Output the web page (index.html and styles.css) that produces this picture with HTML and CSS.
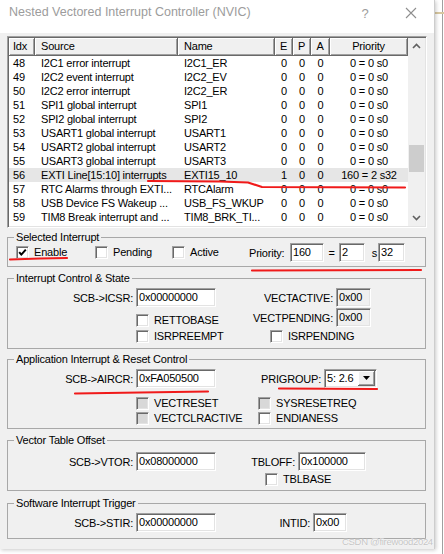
FILE: index.html
```html
<!DOCTYPE html>
<html>
<head>
<meta charset="utf-8">
<title>NVIC</title>
<link rel="stylesheet" href="styles.css">
</head>
<body>
<div class="window">
  <div class="titlebar">
    <span class="title">Nested Vectored Interrupt Controller (NVIC)</span>
    <span class="tbtn help">?</span>
    <span class="tbtn"><svg width="12" height="12" viewBox="0 0 12 12"><path d="M1 1L11 11M11 1L1 11" stroke="#8e8e8e" stroke-width="1.1" fill="none"/></svg></span>
  </div>
  <div class="client">
    <div class="list">
      <div class="list-main">
        <div class="lrow head"><span class="ci">Idx</span><span>Source</span><span>Name</span><span class="cc">E</span><span class="cc">P</span><span class="cc">A</span><span class="cc">Priority</span></div>
        <div class="lrow"><span class="ci">48</span><span>I2C1 error interrupt</span><span>I2C1_ER</span><span class="cc">0</span><span class="cc">0</span><span class="cc">0</span><span class="cc">0 = 0 s0</span></div>
        <div class="lrow"><span class="ci">49</span><span>I2C2 event interrupt</span><span>I2C2_EV</span><span class="cc">0</span><span class="cc">0</span><span class="cc">0</span><span class="cc">0 = 0 s0</span></div>
        <div class="lrow"><span class="ci">50</span><span>I2C2 error interrupt</span><span>I2C2_ER</span><span class="cc">0</span><span class="cc">0</span><span class="cc">0</span><span class="cc">0 = 0 s0</span></div>
        <div class="lrow"><span class="ci">51</span><span>SPI1 global interrupt</span><span>SPI1</span><span class="cc">0</span><span class="cc">0</span><span class="cc">0</span><span class="cc">0 = 0 s0</span></div>
        <div class="lrow"><span class="ci">52</span><span>SPI2 global interrupt</span><span>SPI2</span><span class="cc">0</span><span class="cc">0</span><span class="cc">0</span><span class="cc">0 = 0 s0</span></div>
        <div class="lrow"><span class="ci">53</span><span>USART1 global interrupt</span><span>USART1</span><span class="cc">0</span><span class="cc">0</span><span class="cc">0</span><span class="cc">0 = 0 s0</span></div>
        <div class="lrow"><span class="ci">54</span><span>USART2 global interrupt</span><span>USART2</span><span class="cc">0</span><span class="cc">0</span><span class="cc">0</span><span class="cc">0 = 0 s0</span></div>
        <div class="lrow"><span class="ci">55</span><span>USART3 global interrupt</span><span>USART3</span><span class="cc">0</span><span class="cc">0</span><span class="cc">0</span><span class="cc">0 = 0 s0</span></div>
        <div class="lrow sel"><span class="ci">56</span><span>EXTI Line[15:10] interrupts</span><span>EXTI15_10</span><span class="cc">1</span><span class="cc">0</span><span class="cc">0</span><span class="cc">160 = 2 s32</span></div>
        <div class="lrow"><span class="ci">57</span><span>RTC Alarms through EXTI...</span><span>RTCAlarm</span><span class="cc">0</span><span class="cc">0</span><span class="cc">0</span><span class="cc">0 = 0 s0</span></div>
        <div class="lrow"><span class="ci">58</span><span>USB Device FS Wakeup ...</span><span>USB_FS_WKUP</span><span class="cc">0</span><span class="cc">0</span><span class="cc">0</span><span class="cc">0 = 0 s0</span></div>
        <div class="lrow"><span class="ci">59</span><span>TIM8 Break interrupt and ...</span><span>TIM8_BRK_TI...</span><span class="cc">0</span><span class="cc">0</span><span class="cc">0</span><span class="cc">0 = 0 s0</span></div>
      </div>
      <div class="sb">
        <div class="sb-btn"><svg width="9" height="6" viewBox="0 0 9 6"><path d="M1 5L4.5 1.5L8 5" stroke="#606060" stroke-width="1.6" fill="none"/></svg></div>
        <div class="sb-track"><div class="sb-thumb"></div></div>
        <div class="sb-btn down"><svg width="9" height="6" viewBox="0 0 9 6"><path d="M1 1L4.5 4.5L8 1" stroke="#606060" stroke-width="1.6" fill="none"/></svg></div>
      </div>
    </div>

    <fieldset class="grp g1">
      <legend>Selected Interrupt</legend>
      <div class="row r-sel">
        <span class="cb w79"><span class="box"><svg width="11" height="11" viewBox="0 0 11 11"><path d="M2.2 5.2L4.3 7.6L8.8 2.6" stroke="#000" stroke-width="2" fill="none"/></svg></span>Enable</span>
        <span class="cb w77"><span class="box"></span>Pending</span>
        <span class="cb w77"><span class="box"></span>Active</span>
        <span class="txt w41">Priority:</span>
        <span class="edit w34">160</span>
        <span class="txt eq">=</span>
        <span class="edit w26">2</span>
        <span class="lbl w13">s</span>
        <span class="edit w27">32</span>
      </div>
    </fieldset>

    <fieldset class="grp g2">
      <legend>Interrupt Control &amp; State</legend>
      <div class="row r-first">
        <span class="lbl w128">SCB-&gt;ICSR:</span>
        <span class="edit w80">0x00000000</span>
        <span class="lbl w120">VECTACTIVE:</span>
        <span class="edit w35 dis">0x00</span>
      </div>
      <div class="row r-tight">
        <span class="sp w128"></span>
        <span class="cb w80 low"><span class="box"></span>RETTOBASE</span>
        <span class="lbl w120">VECTPENDING:</span>
        <span class="edit w35 dis">0x00</span>
      </div>
      <div class="row ck13">
        <span class="sp w128"></span>
        <span class="cb w134"><span class="box"></span>ISRPREEMPT</span>
        <span class="cb"><span class="box"></span>ISRPENDING</span>
      </div>
    </fieldset>

    <fieldset class="grp g3">
      <legend>Application Interrupt &amp; Reset Control</legend>
      <div class="row r-first">
        <span class="lbl w128">SCB-&gt;AIRCR:</span>
        <span class="edit w80">0xFA050500</span>
        <span class="lbl w108">PRIGROUP:</span>
        <span class="combo"><span class="combo-text">5: 2.6</span><span class="combo-btn"><svg width="7" height="4" viewBox="0 0 7 4"><path d="M0 0H7L3.5 4Z" fill="#000"/></svg></span></span>
      </div>
      <div class="row ck r-gap">
        <span class="sp w128"></span>
        <span class="cb w122"><span class="box dis"></span>VECTRESET</span>
        <span class="cb"><span class="box dis"></span>SYSRESETREQ</span>
      </div>
      <div class="row ck">
        <span class="sp w128"></span>
        <span class="cb w122"><span class="box dis"></span>VECTCLRACTIVE</span>
        <span class="cb"><span class="box"></span>ENDIANESS</span>
      </div>
    </fieldset>

    <fieldset class="grp g4">
      <legend>Vector Table Offset</legend>
      <div class="row r-first5">
        <span class="lbl w128">SCB-&gt;VTOR:</span>
        <span class="edit w80">0x08000000</span>
        <span class="lbl w82">TBLOFF:</span>
        <span class="edit w68">0x100000</span>
      </div>
      <div class="row ck r-tight">
        <span class="sp w257"></span>
        <span class="cb"><span class="box"></span>TBLBASE</span>
      </div>
    </fieldset>

    <fieldset class="grp g5">
      <legend>Software Interrupt Trigger</legend>
      <div class="row r-first">
        <span class="lbl w128">SCB-&gt;STIR:</span>
        <span class="edit w80">0x00000000</span>
        <span class="lbl w97">INTID:</span>
        <span class="edit w34">0x00</span>
      </div>
    </fieldset>
  </div>
</div>

<svg class="marks" width="444" height="554" viewBox="0 0 444 554">
  <polyline points="148,181 220,181.5 248,182.5 262,187 405,187.5" />
  <polyline points="10,259.5 40,258.5 67,258" />
  <polyline points="252,270.5 421,270" />
  <polyline points="75,393.5 140,392.5 208,391.5" />
  <polyline points="279,388.5 377,389" />
</svg>
<div class="watermark">CSDN @firewood2024</div>
</body>
</html>
```

FILE: styles.css
```css
* { box-sizing: border-box; }
html, body { margin: 0; padding: 0; }
body {
  width: 444px;
  height: 554px;
  position: relative;
  overflow: hidden;
  background:
    linear-gradient(to bottom, transparent 12px, #d8c8a0 12px, #d8c8a0 14px, transparent 14px),
    linear-gradient(to right, transparent 442px, #a0a0a0 442px, #a0a0a0 443px, transparent 443px),
    #ffffff;
  font-family: "Liberation Sans", Arial, sans-serif;
  font-size: 11px;
  letter-spacing: -0.2px;
  color: #000;
}

.window {
  width: 435px;
  height: 549px;
  background: #f0f0f0;
  display: flex;
  flex-direction: column;
  border-right: 1px solid #cdcdcd;
  box-shadow: 1px 1px 4px rgba(0, 0, 0, 0.22);
}

.titlebar {
  height: 33px;
  flex: none;
  background: #ffffff;
  display: flex;
  align-items: flex-start;
}
.title {
  flex: 1;
  padding-left: 9px;
  font-size: 12.5px;
  letter-spacing: 0;
  line-height: 25px;
  color: #9c9c9c;
  white-space: nowrap;
}
.tbtn {
  width: 46px;
  height: 25px;
  flex: none;
  display: flex;
  align-items: center;
  justify-content: center;
  color: #9c9c9c;
  font-size: 13px;
  letter-spacing: 0;
}
.help { padding-top: 1px; }

.client {
  flex: 1;
  display: flex;
  flex-direction: column;
  padding: 3px 0 0 7px;
}

/* list view */
.list {
  width: 420px;
  height: 192px;
  flex: none;
  display: flex;
  padding: 1px;
  background: #fff;
  border: 1px solid;
  border-color: #a0a0a0 #ffffff #ffffff #a0a0a0;
  box-shadow: inset 1px 1px 0 #696969, inset -1px -1px 0 #e3e3e3;
}
.list-main {
  width: 399px;
  height: 188px;
  background: #fff;
}
.lrow {
  display: grid;
  grid-template-columns: 26px 143px 97px 18px 18px 19px 78px;
  height: 14px;
  line-height: 14px;
}
.lrow span {
  white-space: nowrap;
  overflow: hidden;
  padding-left: 6px;
}
.lrow .ci { padding-left: 4px; }
.lrow .cc { padding-left: 0; text-align: center; }
.lrow.head { height: 18px; line-height: 17px; }
.lrow.head span {
  background: #f0f0f0;
  border-right: 1px solid #696969;
  border-bottom: 1px solid #696969;
  box-shadow: inset 1px 1px 0 #ffffff, inset -1px -1px 0 #a0a0a0;
}
.lrow.sel { background: #e6e6e6; }

.sb {
  width: 17px;
  height: 188px;
  background: #f0f0f0;
  display: flex;
  flex-direction: column;
}
.sb-btn {
  height: 17px;
  flex: none;
  display: flex;
  align-items: center;
  justify-content: center;
  padding-bottom: 2px;
}
.sb-btn.down { padding-bottom: 0; }
.sb-track { flex: 1; padding: 0 1px; }
.sb-thumb {
  margin-top: 90px;
  height: 27px;
  background: #cdcdcd;
}

/* group boxes */
.grp {
  width: 419px;
  margin: 0;
  padding: 0;
  min-width: 0;
  border: 1px solid #a8a8a8;
  flex: none;
}
.grp legend {
  padding: 0 2px;
  margin-left: 6px;
  line-height: 14px;
  height: 14px;
}
.g1 { height: 37px; margin-top: 2px; }
.g2 { height: 78px; margin-top: 4px; }
.g3 { height: 77px; margin-top: 3px; }
.g4 { height: 58px; margin-top: 4px; }
.g5 { height: 43px; margin-top: 5px; }

.row {
  display: flex;
  align-items: center;
  height: 19px;
  white-space: nowrap;
}
.row.ck { height: 15px; }
.row.ck13 { height: 13px; margin-top: 3px; }
.r-sel { margin-top: -1px; padding-left: 8px; }
.r-first { margin-top: 3px; }
.r-first5 { margin-top: 5px; }
.r-tight { margin-top: 1px; }
.r-gap { margin-top: 8px; }

.lbl { text-align: right; padding-right: 3px; flex: none; }
.txt { flex: none; }
.sp { flex: none; }
.eq { width: 15px; text-align: center; }

.w13 { width: 13px; padding-right: 1px; }
.w26 { width: 26px; }
.w27 { width: 27px; }
.w34 { width: 34px; }
.w35 { width: 35px; }
.w41 { width: 41px; }
.w68 { width: 68px; }
.w77 { width: 77px; }
.w79 { width: 79px; }
.w80 { width: 80px; }
.w82 { width: 82px; }
.w97 { width: 97px; }
.w108 { width: 108px; }
.w120 { width: 120px; }
.w122 { width: 122px; }
.w128 { width: 128px; }
.w134 { width: 134px; }
.w257 { width: 257px; }

.edit {
  height: 19px;
  flex: none;
  background: #fff;
  border: 1px solid;
  border-color: #a0a0a0 #ffffff #ffffff #a0a0a0;
  box-shadow: inset 1px 1px 0 #696969, inset -1px -1px 0 #e3e3e3;
  padding-left: 2px;
  line-height: 17px;
  white-space: nowrap;
  overflow: hidden;
}
.edit.dis { background: #f0f0f0; }

.cb {
  display: flex;
  align-items: center;
  flex: none;
  white-space: nowrap;
  line-height: 13px;
}
.cb.low { align-self: flex-end; }
.box {
  width: 13px;
  height: 13px;
  flex: none;
  margin-right: 5px;
  background: #fff;
  border: 1px solid;
  border-color: #a0a0a0 #ffffff #ffffff #a0a0a0;
  box-shadow: inset 1px 1px 0 #696969, inset -1px -1px 0 #e3e3e3;
  display: flex;
}
.box.dis { background: #d8d8d8; }

.combo {
  width: 53px;
  height: 19px;
  flex: none;
  display: flex;
  align-items: stretch;
  background: #fff;
  border: 1px solid;
  border-color: #a0a0a0 #ffffff #ffffff #a0a0a0;
  box-shadow: inset 1px 1px 0 #696969, inset -1px -1px 0 #e3e3e3;
  padding: 1px;
}
.combo-text {
  flex: 1;
  padding-left: 1px;
  line-height: 15px;
}
.combo-btn {
  width: 17px;
  flex: none;
  display: flex;
  align-items: center;
  justify-content: center;
  background: #f0f0f0;
  border-right: 1px solid #696969;
  border-bottom: 1px solid #696969;
  box-shadow: inset 1px 1px 0 #ffffff, inset -1px -1px 0 #a0a0a0;
}

.marks {
  position: absolute;
  left: 0;
  top: 0;
  pointer-events: none;
}
.marks polyline {
  fill: none;
  stroke: #f01a1a;
  stroke-width: 2.2;
  stroke-linecap: round;
  stroke-linejoin: round;
}

.watermark {
  position: absolute;
  left: 342px;
  top: 536px;
  font-size: 9.5px;
  letter-spacing: -0.3px;
  line-height: 12px;
  color: #c4c4c4;
  text-shadow: 0 0 1px #fff, 0 0 1px #fff;
  white-space: nowrap;
}
```
